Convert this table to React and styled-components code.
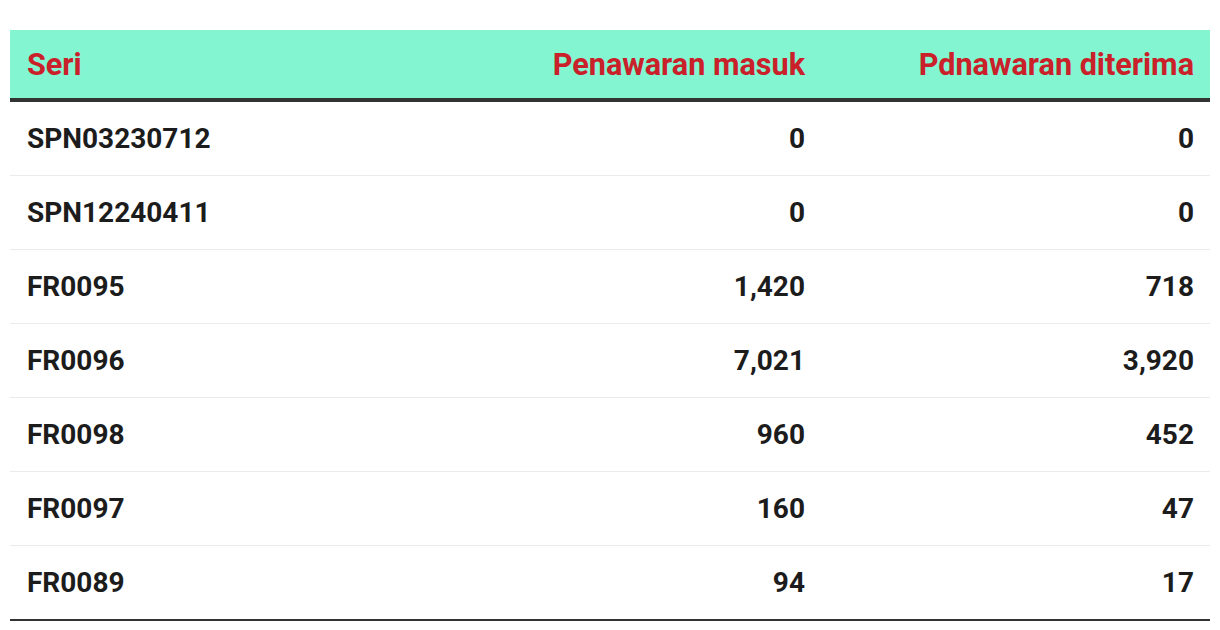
import React from 'react';
import styled, { createGlobalStyle } from 'styled-components';

const GlobalStyle = createGlobalStyle`
	body {
		margin: 0;
		background: #fff;
		font-family: Roboto, "Liberation Sans", sans-serif;
	}
`;

const Wrapper = styled.div`
	padding: 30px 10px 0;
`;

const Table = styled.table`
	width: 1200px;
	border-collapse: collapse;
	table-layout: fixed;
	border-bottom: 2px solid #333;
`;

const HeadCell = styled.th`
	background: #84f5d1;
	color: #c9202a;
	font-size: 30.6px;
	font-weight: 700;
	height: 70px;
	padding: 0 16px 0 17px;
	text-align: ${({ $align }) => $align || 'left'};
	border-bottom: 4px solid #333;
	box-sizing: border-box;
`;

const Row = styled.tr`
	border-top: 1px solid #ebebeb;

	&:first-child {
		border-top: none;
	}
`;

const Cell = styled.td`
	height: 73px;
	padding: 0 16px 0 17px;
	font-size: 28px;
	font-weight: 700;
	color: #1c1c1c;
	text-align: ${({ $align }) => $align || 'left'};
`;

const rows = [
	['SPN03230712', '0', '0'],
	['SPN12240411', '0', '0'],
	['FR0095', '1,420', '718'],
	['FR0096', '7,021', '3,920'],
	['FR0098', '960', '452'],
	['FR0097', '160', '47'],
	['FR0089', '94', '17'],
];

const App = () => {
	return (
		<Wrapper>
			<GlobalStyle />
			<Table>
				<colgroup>
					<col style={{ width: 400 }} />
					<col style={{ width: 411 }} />
					<col style={{ width: 389 }} />
				</colgroup>
				<thead>
					<tr>
						<HeadCell>Seri</HeadCell>
						<HeadCell $align="right">Penawaran masuk</HeadCell>
						<HeadCell $align="right">Pdnawaran diterima</HeadCell>
					</tr>
				</thead>
				<tbody>
					{rows.map(([seri, masuk, diterima]) => (
						<Row key={seri}>
							<Cell>{seri}</Cell>
							<Cell $align="right">{masuk}</Cell>
							<Cell $align="right">{diterima}</Cell>
						</Row>
					))}
				</tbody>
			</Table>
		</Wrapper>
	);
};

export default App;
